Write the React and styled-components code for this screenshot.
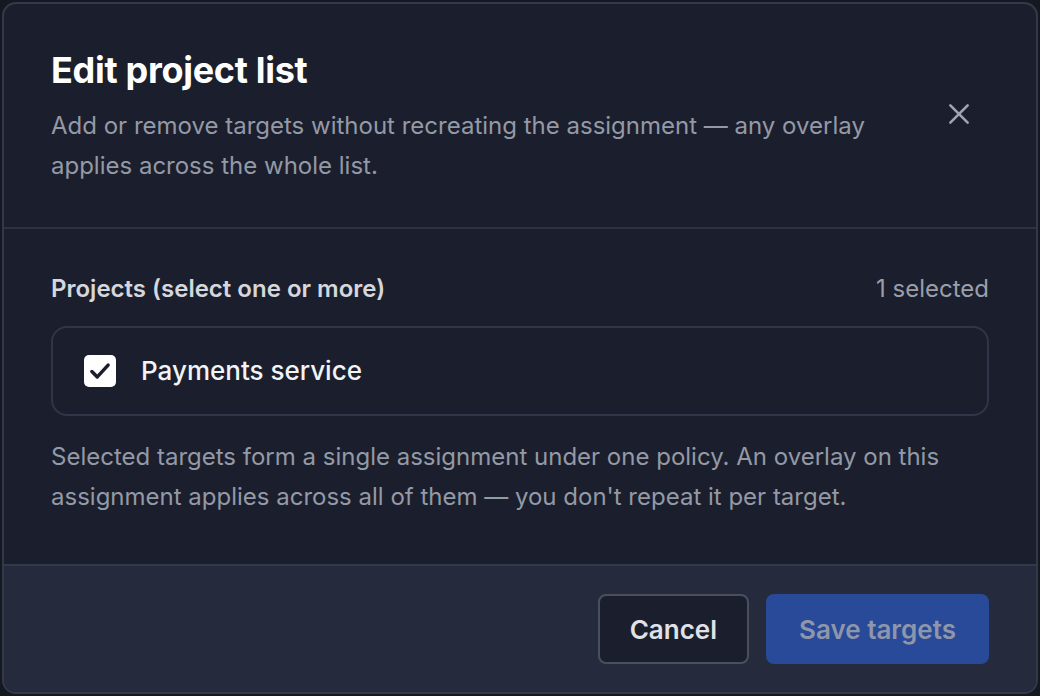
import React from "react";
import styled, { createGlobalStyle } from "styled-components";

const Global = createGlobalStyle`
  html, body { margin: 0; padding: 0; background: #161821; }
  body { font-family: Inter, "Noto Sans", sans-serif; -webkit-font-smoothing: antialiased; }
  * { box-sizing: border-box; }
`;

const Page = styled.div`
  width: 1040px;
  height: 696px;
  padding: 2px;
  display: flex;
`;

const Dialog = styled.div`
  flex: 1;
  display: flex;
  flex-direction: column;
  background: #1b1f2d;
  border: 2px solid #343949;
  border-radius: 14px;
  overflow: hidden;
`;

const Header = styled.div`
  display: flex;
  align-items: flex-start;
  gap: 24px;
  padding: 45px 47px 41px 47px;
  border-bottom: 2px solid #2e3343;
`;

const HeaderText = styled.div`
  flex: 1;
  display: flex;
  flex-direction: column;
  gap: 15px;
`;

const Title = styled.h2`
  margin: 0;
  font-size: 36px;
  line-height: 42px;
  font-weight: 700;
  color: #ffffff;
  letter-spacing: -0.3px;
`;

const Subtitle = styled.p`
  margin: 0;
  font-size: 24px;
  line-height: 40px;
  color: #9499a6;
  max-width: 840px;
`;

const CloseButton = styled.button`
  width: 44px;
  height: 44px;
  margin: 43px 8px 0 0;
  border: none;
  background: transparent;
  color: #9fa3ad;
  display: flex;
  align-items: center;
  justify-content: center;
  padding: 0;
  cursor: pointer;
`;

const Body = styled.div`
  flex: 1;
  padding: 44px 47px 0 47px;
  display: flex;
  flex-direction: column;
`;

const FieldHead = styled.div`
  display: flex;
  justify-content: space-between;
  align-items: center;
  font-size: 24px;
  line-height: 31.5px;
`;

const Label = styled.span`
  font-weight: 600;
  color: #d5d7dd;
`;

const Count = styled.span`
  color: #9a9ea9;
`;

const OptionList = styled.div`
  margin-top: 21px;
  border: 2px solid #30364a;
  border-radius: 16px;
  display: flex;
  flex-direction: column;
`;

const Option = styled.label`
  height: 86px;
  display: flex;
  align-items: center;
  gap: 25px;
  padding-left: 31px;
  cursor: pointer;
`;

const Box = styled.span`
  width: 32px;
  height: 32px;
  border-radius: 5px;
  background: ${(p) => (p.checked ? "#ffffff" : "transparent")};
  border: ${(p) => (p.checked ? "none" : "2px solid #5a5f6e")};
  display: flex;
  align-items: center;
  justify-content: center;
  color: #1b1f2d;
`;

const OptionText = styled.span`
  font-size: 26px;
  font-weight: 500;
  color: #f2f3f5;
`;

const Help = styled.p`
  margin: 21px 0 0 0;
  font-size: 24px;
  line-height: 40px;
  color: #9499a6;
`;

const Footer = styled.div`
  height: 128px;
  background: #262a3d;
  border-top: 2px solid #343949;
  display: flex;
  justify-content: flex-end;
  align-items: center;
  gap: 17px;
  padding: 0 47px 0 47px;
`;

const Button = styled.button`
  height: 70px;
  padding: 0 ${(p) => (p.primary ? "33px" : "30px")};
  border-radius: 8px;
  font-family: Inter, "Noto Sans", sans-serif;
  font-size: 26px;
  font-weight: 600;
  cursor: pointer;
  border: ${(p) => (p.primary ? "none" : "2px solid #4a4f5e")};
  background: ${(p) => (p.primary ? "#284a98" : "#1b1f2d")};
  color: ${(p) => (p.primary ? "#8e96ac" : "#e0e2e7")};
`;

export default function App() {
  return (
    <>
      <Global />
      <Page>
        <Dialog>
          <Header>
            <HeaderText>
              <Title>Edit project list</Title>
              <Subtitle>
                Add or remove targets without recreating the assignment — any
                overlay applies across the whole list.
              </Subtitle>
            </HeaderText>
            <CloseButton aria-label="Close">
              <svg width="26" height="26" viewBox="0 0 24 24" fill="none" stroke="currentColor" strokeWidth="2.4" strokeLinecap="round">
                <path d="M4 4 L20 20 M20 4 L4 20" />
              </svg>
            </CloseButton>
          </Header>
          <Body>
            <FieldHead>
              <Label>Projects (select one or more)</Label>
              <Count>1 selected</Count>
            </FieldHead>
            <OptionList>
              <Option>
                <Box checked>
                  <svg width="26" height="26" viewBox="0 0 24 24" fill="none" stroke="currentColor" strokeWidth="3.2" strokeLinecap="round" strokeLinejoin="round">
                    <path d="M4.5 12.5 L9.5 17.5 L19.5 6.5" />
                  </svg>
                </Box>
                <OptionText>Payments service</OptionText>
              </Option>
            </OptionList>
            <Help>
              Selected targets form a single assignment under one policy. An
              overlay on this assignment applies across all of them — you don't
              repeat it per target.
            </Help>
          </Body>
          <Footer>
            <Button>Cancel</Button>
            <Button primary>Save targets</Button>
          </Footer>
        </Dialog>
      </Page>
    </>
  );
}
